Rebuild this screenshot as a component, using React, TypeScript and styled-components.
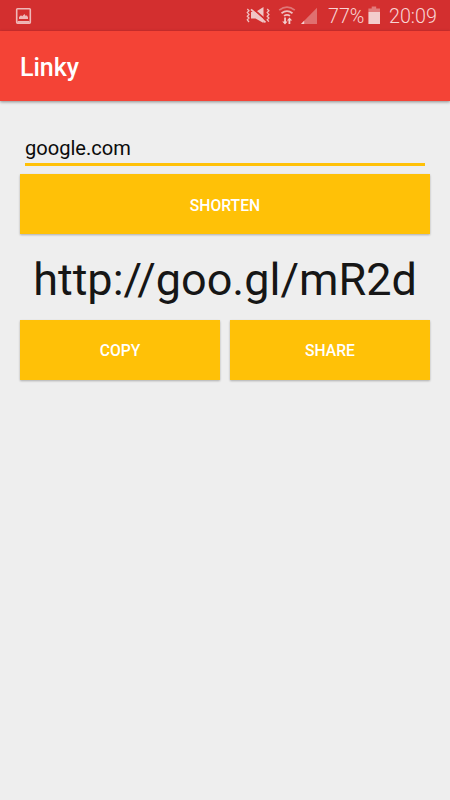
import React from "react";
import styled, { createGlobalStyle } from "styled-components";

const GlobalStyle = createGlobalStyle`
  * { box-sizing: border-box; }
  body { margin: 0; background: #eeeeee; font-family: Roboto, sans-serif; }
`;

const Screen = styled.div`
  width: 450px;
  height: 800px;
  display: flex;
  flex-direction: column;
  background: #eeeeee;
  overflow: hidden;
`;

const StatusBar = styled.header`
  height: 31px;
  flex: none;
  display: flex;
  justify-content: space-between;
  padding: 0 14px 0 15px;
  background: #d32f2f;
  color: #f8d4d4;

  svg { display: block; flex: none; }
`;

const StatusGroup = styled.div`
  display: flex;
  align-items: flex-start;
`;

const StatusText = styled.span<{ $width: number; $gap: number }>`
  width: ${(p) => p.$width}px;
  margin-left: ${(p) => p.$gap}px;
  font-size: 19.7px;
  font-weight: 300;
  line-height: 34px;
  white-space: nowrap;
`;

const AppBar = styled.div`
  height: 70px;
  flex: none;
  padding-left: 20px;
  background: #f44336;
  box-shadow: 0 1px 3px rgba(0, 0, 0, 0.42);
`;

const Title = styled.h1`
  margin: 0;
  color: #fff;
  font-size: 25px;
  font-weight: 500;
  line-height: 73px;
`;

const Content = styled.main`
  display: flex;
  flex-direction: column;
  padding: 30px 20px 0;
`;

const UrlInput = styled.input`
  height: 35px;
  margin: 0 5px 8px;
  padding: 1px 0 0;
  border: 0;
  border-bottom: 3px solid #ffc107;
  border-radius: 0;
  outline: 0;
  background: transparent;
  color: #0b0b0b;
  font: 400 20.1px Roboto, sans-serif;
`;

const Button = styled.button`
  height: 60px;
  flex: 1 0 auto;
  padding: 2px 0 0;
  border: 0;
  background: #ffc107;
  color: #fff;
  font: 500 15.7px Roboto, sans-serif;
  text-align: center;
  box-shadow: 0 1px 2px rgba(0, 0, 0, 0.28);
`;

const ShortUrl = styled.output`
  height: 86px;
  color: #161616;
  font-size: 45px;
  line-height: 91px;
  text-align: center;
  white-space: nowrap;
`;

const Actions = styled.div`
  display: grid;
  grid-template-columns: 200px 200px;
  gap: 10px;

  ${Button} { padding-top: 1px; }
`;

const PictureIcon = () => (
  <svg width="18" height="31" viewBox="0 0 18 31">
    <rect x="1.7" y="8.7" width="13.6" height="14.4" rx="0.8" fill="none" stroke="#efb8b8" strokeWidth="1.6" />
    <path d="M2.5 21.9h12" stroke="#efb8b8" strokeWidth="1.8" />
    <path d="M4 19v-2l2-1.8 1.2 1L9.5 14l1.3 2 1-.8 1.2 2V19z" fill="#efb8b8" />
  </svg>
);

const MuteIcon = () => (
  <svg width="26" height="31" viewBox="0 0 26 31">
    <path d="M5 12h4.5l8-5v16l-8-4.5H5z" fill="#f0c5c5" />
    <path d="M6 8l14 12" stroke="#d32f2f" strokeWidth="1.8" />
    <path d="M5 9.3l14.5 13" stroke="#f0c5c5" strokeWidth="1.8" />
    <path d="M1.3 9l1.7 1.8-1.7 1.8L3 14.4l-1.7 1.8L3 18l-1.7 1.8L3 22M21.2 9l1.7 1.8-1.7 1.8 1.7 1.8-1.7 1.8 1.7 1.8-1.7 1.8 1.7 1.8" fill="none" stroke="#efc0c0" strokeWidth="1.3" />
  </svg>
);

const WifiIcon = () => (
  <svg width="28" height="31" viewBox="0 0 28 31">
    <g fill="none" strokeWidth="1.7">
      <path d="M7.2 10.2q7.8-6.3 15.6 0" stroke="#df7777" />
      <path d="M9.5 13.2q5.5-4.2 11 0" stroke="#efc0c0" />
      <path d="M12 15.9q3-2 6 0" stroke="#efc0c0" />
    </g>
    <path d="M12.2 17.5h1.7v4h1.7L13 24.5l-2.8-3h2zM16.5 24v-3.5h-1.6l2.6-3 2.7 3h-1.9V24z" fill="#f3d0d0" />
  </svg>
);

const SignalIcon = () => (
  <svg width="20" height="31" viewBox="0 0 20 31">
    <path d="M1 24L17 7.8V24z" fill="#e06f6f" />
    <path d="M1 24l3.2-3.2V24z" fill="#f5d0d0" />
  </svg>
);

const BatteryIcon = () => (
  <svg width="14" height="31" viewBox="0 0 14 31">
    <path d="M4.7 6.6h4.5v2h3.8V12H1.4V8.6h3.3z" fill="#e27b7b" />
    <path d="M1.4 12H13v12H1.4z" fill="#f3cccc" />
  </svg>
);

export default function App() {
  return (
    <Screen>
      <GlobalStyle />
      <StatusBar>
        <StatusGroup>
          <PictureIcon />
        </StatusGroup>
        <StatusGroup>
          <MuteIcon />
          <WifiIcon />
          <SignalIcon />
          <StatusText $width={39} $gap={8}>77%</StatusText>
          <BatteryIcon />
          <StatusText $width={47} $gap={8}>20:09</StatusText>
        </StatusGroup>
      </StatusBar>
      <AppBar>
        <Title>Linky</Title>
      </AppBar>
      <Content>
        <UrlInput defaultValue="google.com" aria-label="Link" />
        <Button>SHORTEN</Button>
        <ShortUrl>http://goo.gl/mR2d</ShortUrl>
        <Actions>
          <Button>COPY</Button>
          <Button>SHARE</Button>
        </Actions>
      </Content>
    </Screen>
  );
}
